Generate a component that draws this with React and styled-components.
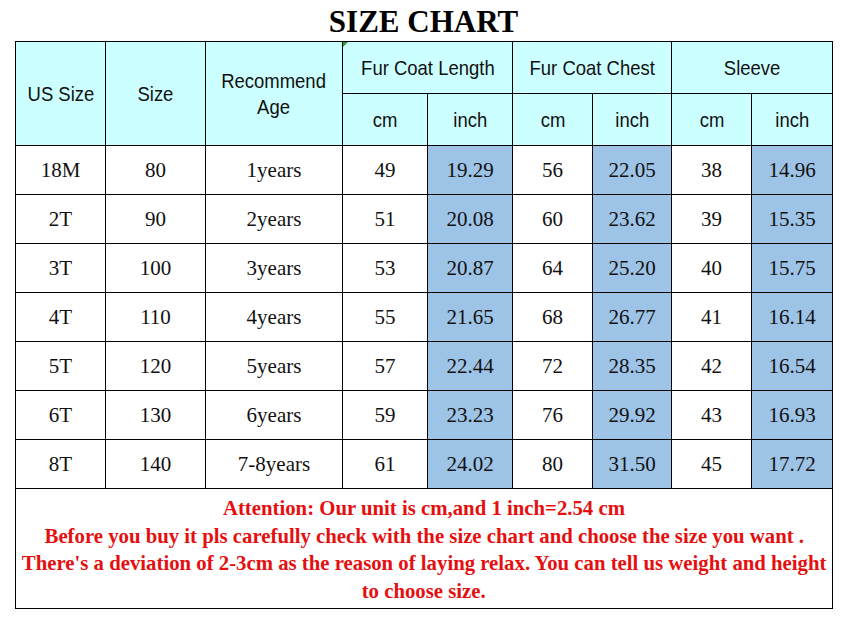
import React from "react";
import styled, { createGlobalStyle } from "styled-components";

const GlobalStyle = createGlobalStyle`
  body {
    margin: 0;
    background: #ffffff;
  }
`;

const Page = styled.div`
  width: 848px;
  height: 620px;
  background: #ffffff;
  padding: 0 0 0 15px;
  box-sizing: border-box;
`;

const Title = styled.h1`
  margin: 0;
  width: 817px;
  height: 41px;
  line-height: 44px;
  text-align: center;
  font-family: "Liberation Serif", "Times New Roman", serif;
  font-weight: bold;
  font-size: 31px;
  color: #000000;
`;

const Chart = styled.table`
  border-collapse: collapse;
  table-layout: fixed;
  width: 817px;
`;

const HeadCell = styled.th`
  position: relative;
  height: 51px;
  padding: 0;
  border: 1px solid #000000;
  background: #ccffff;
  font-family: "Liberation Sans", Arial, sans-serif;
  font-weight: normal;
  font-size: 21px;
  line-height: 26px;
  color: #111111;
  text-align: center;
  vertical-align: middle;

  ${(p) =>
    p.$marked &&
    `
    &:before {
      content: "";
      position: absolute;
      top: 0;
      left: 0;
      border-top: 5px solid #2e9b3a;
      border-right: 5px solid transparent;
    }
  `}
`;

const Narrow = styled.span`
  display: inline-block;
  transform: scaleX(0.88);
`;

const Cell = styled.td`
  height: 48px;
  padding: 0;
  border: 1px solid #000000;
  background: ${(p) => (p.$shade ? "#9dc3e6" : "#ffffff")};
  font-family: "Liberation Serif", "Times New Roman", serif;
  font-size: 21px;
  color: #111111;
  text-align: center;
  vertical-align: middle;
`;

const NoteCell = styled.td`
  height: 120px;
  padding: 5px 0 0;
  border: 1px solid #000000;
  box-sizing: border-box;
  vertical-align: top;
  font-family: "Liberation Serif", "Times New Roman", serif;
  font-weight: bold;
  font-size: 22px;
  line-height: 27.5px;
  color: #e60f0f;
`;

const NoteLine = styled.div`
  display: flex;
  justify-content: center;
  white-space: nowrap;
  overflow: visible;
`;

const NoteText = styled.span`
  flex: none;
  transform: scaleX(0.944);
`;

const notes = [
  "Attention: Our unit is cm,and 1 inch=2.54 cm",
  "Before you buy it pls carefully check with the size chart and choose the size you want .",
  "There's a deviation of 2-3cm as the reason of laying relax. You can tell us weight and height",
  "to choose size.",
];

const widths = [90, 100, 137, 85, 85, 80, 79, 80, 81];

const rows = [
  ["18M", "80", "1years", "49", "19.29", "56", "22.05", "38", "14.96"],
  ["2T", "90", "2years", "51", "20.08", "60", "23.62", "39", "15.35"],
  ["3T", "100", "3years", "53", "20.87", "64", "25.20", "40", "15.75"],
  ["4T", "110", "4years", "55", "21.65", "68", "26.77", "41", "16.14"],
  ["5T", "120", "5years", "57", "22.44", "72", "28.35", "42", "16.54"],
  ["6T", "130", "6years", "59", "23.23", "76", "29.92", "43", "16.93"],
  ["8T", "140", "7-8years", "61", "24.02", "80", "31.50", "45", "17.72"],
];

const shaded = [4, 6, 8];

export default function App() {
  return (
    <>
      <GlobalStyle />
      <Page>
        <Title>SIZE CHART</Title>
        <Chart>
          <colgroup>
            {widths.map((w, i) => (
              <col key={i} style={{ width: w }} />
            ))}
          </colgroup>
          <thead>
            <tr>
              <HeadCell rowSpan={2}>
                <Narrow>US Size</Narrow>
              </HeadCell>
              <HeadCell rowSpan={2}>
                <Narrow>Size</Narrow>
              </HeadCell>
              <HeadCell rowSpan={2}>
                <Narrow>
                  Recommend
                  <br />
                  Age
                </Narrow>
              </HeadCell>
              <HeadCell colSpan={2} $marked>
                <Narrow>Fur Coat Length</Narrow>
              </HeadCell>
              <HeadCell colSpan={2}>
                <Narrow>Fur Coat Chest</Narrow>
              </HeadCell>
              <HeadCell colSpan={2}>
                <Narrow>Sleeve</Narrow>
              </HeadCell>
            </tr>
            <tr>
              {["cm", "inch", "cm", "inch", "cm", "inch"].map((u, i) => (
                <HeadCell key={i}>
                  <Narrow>{u}</Narrow>
                </HeadCell>
              ))}
            </tr>
          </thead>
          <tbody>
            {rows.map((row) => (
              <tr key={row[0]}>
                {row.map((v, i) => (
                  <Cell key={i} $shade={shaded.includes(i)}>
                    {v}
                  </Cell>
                ))}
              </tr>
            ))}
            <tr>
              <NoteCell colSpan={9}>
                {notes.map((n) => (
                  <NoteLine key={n}>
                    <NoteText>{n}</NoteText>
                  </NoteLine>
                ))}
              </NoteCell>
            </tr>
          </tbody>
        </Chart>
      </Page>
    </>
  );
}
